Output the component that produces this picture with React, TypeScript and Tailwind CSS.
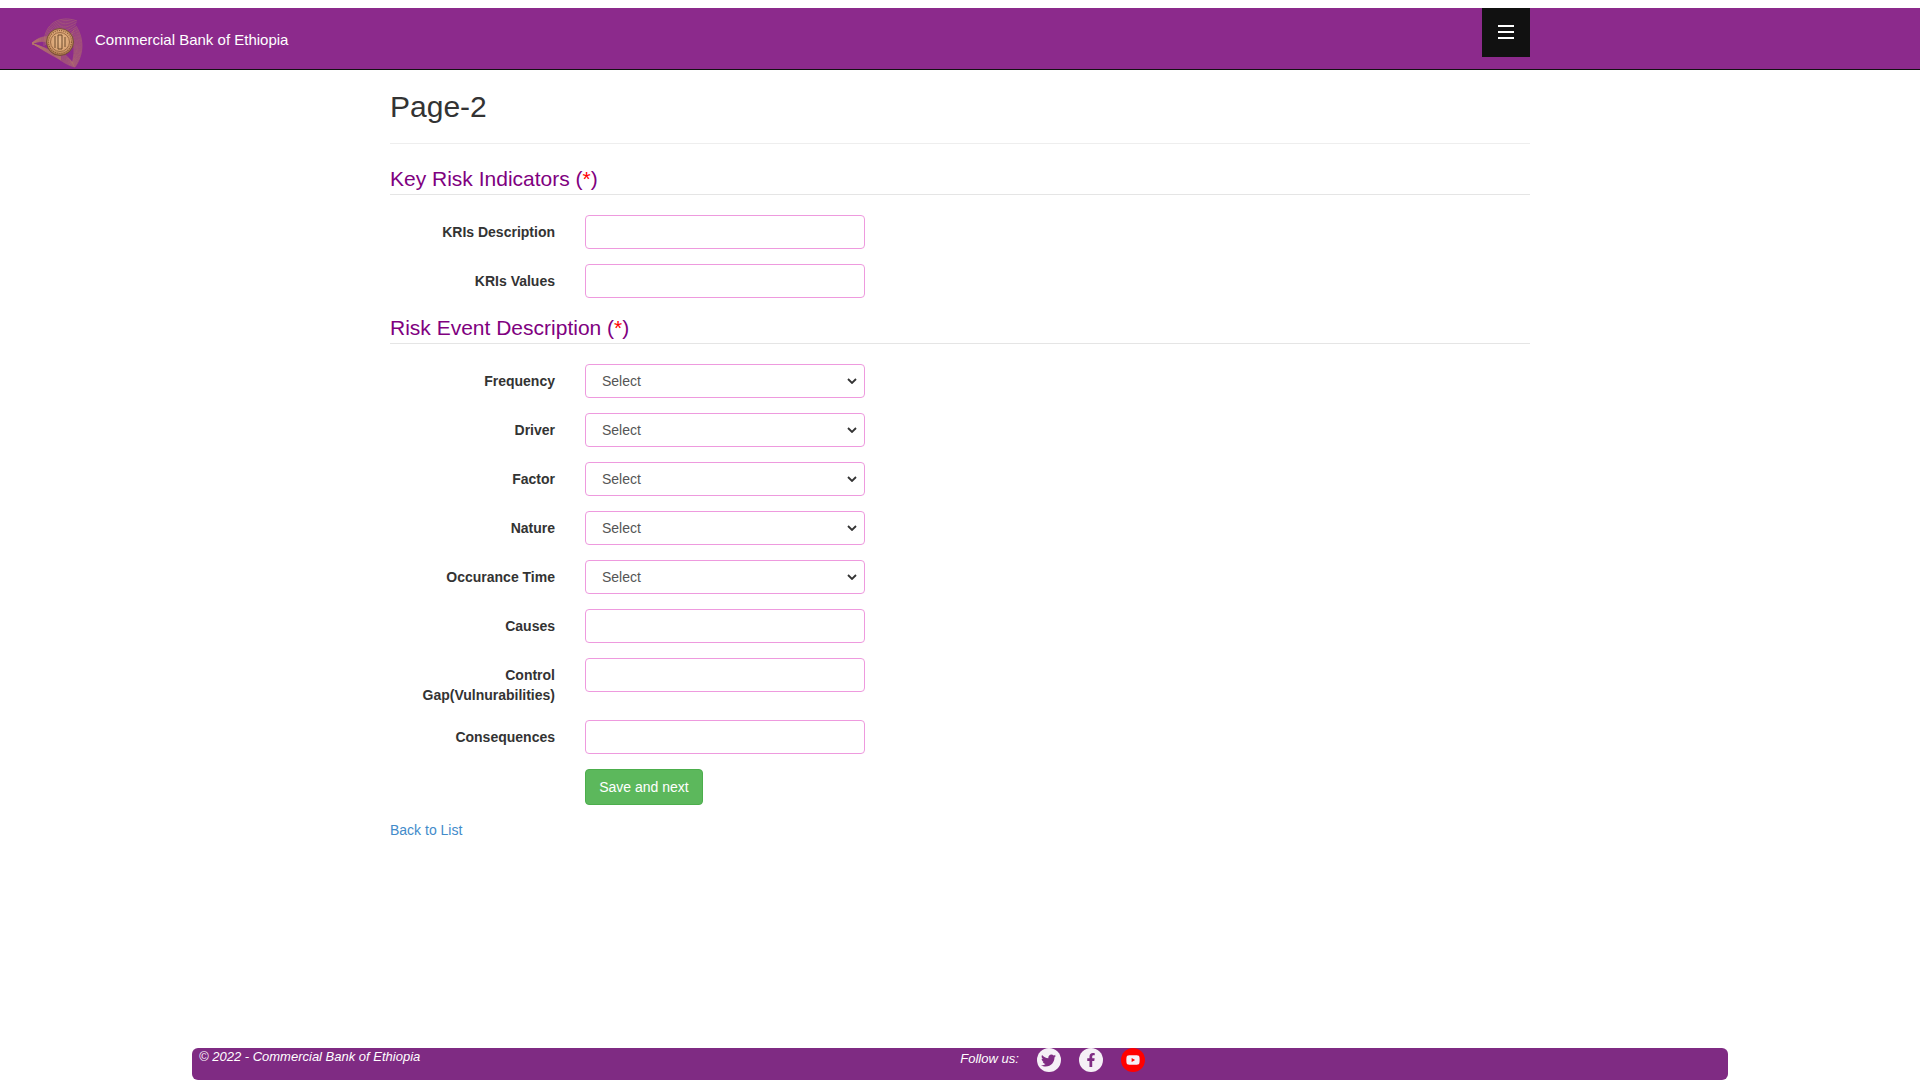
import React from "react";
import { FaTwitter, FaFacebookF, FaYoutube } from "react-icons/fa";

function Logo() {
  const rings = Array.from({ length: 10 }, (_, i) => i);
  return (
    <svg width="52" height="52" viewBox="0 0 52 52" className="shrink-0">
      <defs>
        <radialGradient id="coin" cx="50%" cy="45%" r="55%">
          <stop offset="0%" stopColor="#e8b98a" />
          <stop offset="70%" stopColor="#d8a272" />
          <stop offset="100%" stopColor="#9a6440" />
        </radialGradient>
      </defs>
      <g fill="none" stroke="#c08a60" strokeWidth="0.5" opacity="0.8">
        {rings.map((i) => (
          <path key={`a${i}`} d={`M${13 + i * 1.5} ${30 - i} C ${12 + i} ${6 + i * 1.2}, ${30 + i * 0.5} ${-1 + i * 1.5}, ${46 - i * 0.5} ${5 + i * 1.6}`} />
        ))}
        {rings.map((i) => (
          <path key={`b${i}`} d={`M${45 - i * 0.7} ${10 + i} C ${54 - i} ${24 + i * 0.5}, ${52 - i} ${40}, ${44 - i * 0.3} ${51 - i * 0.5} C ${38} ${50 - i}, ${30} ${45 - i}, ${24 + i} ${40 - i * 0.3}`} />
        ))}
        {rings.map((i) => (
          <path key={`c${i}`} d={`M1 ${27 + i * 0.1} C ${8} ${21 + i * 0.4}, ${14} ${20 + i * 0.6}, ${18} ${21 + i * 0.6}`} />
        ))}
        {rings.map((i) => (
          <path key={`d${i}`} d={`M1 ${27 + i * 0.1} C ${10} ${33 - i * 0.4}, ${20} ${39 - i * 0.5}, ${30} ${44 - i * 0.4}`} />
        ))}
      </g>
      <circle cx="29" cy="26" r="13.5" fill="url(#coin)" stroke="#6d4a2d" strokeWidth="0.8" />
      <circle cx="29" cy="26" r="9.5" fill="none" stroke="#8a5c38" strokeWidth="0.8" />
      <circle cx="29" cy="26" r="11.5" fill="none" stroke="#8a5c38" strokeWidth="1.2" strokeDasharray="1 1.2" />
      <path d="M24 20v12M27 19v14M31 19v14M34 21v10M27 19h4M27 33h4" fill="none" stroke="#6d4a2d" strokeWidth="1" />
    </svg>
  );
}

function Label({ children }: { children: React.ReactNode }) {
  return (
    <label className="w-[165px] mr-[30px] shrink-0 pt-[7px] text-right text-[14px] leading-[20px] font-bold text-[#333333]">
      {children}
    </label>
  );
}

function TextRow({ label }: { label: string }) {
  return (
    <div className="flex items-start mb-[15px]">
      <Label>{label}</Label>
      <input type="text" className="w-[280px] h-[34px] rounded-[4px] border border-[#ee9ade] bg-white px-3 text-[14px] text-[#555555]" />
    </div>
  );
}

function SelectRow({ label }: { label: string }) {
  return (
    <div className="flex items-start mb-[15px]">
      <Label>{label}</Label>
      <div className="relative w-[280px] h-[34px]">
        <select className="appearance-none block w-full h-full rounded-[4px] border border-[#ee9ade] bg-white pl-4 pr-6 text-[14px] text-[#555555]">
          <option>Select</option>
        </select>
        <svg width="10" height="6" viewBox="0 0 10 6" className="absolute right-2 top-[14px] pointer-events-none">
          <path d="M1 1l4 4 4-4" fill="none" stroke="#333333" strokeWidth="1.8" />
        </svg>
      </div>
    </div>
  );
}

function Legend({ children }: { children: string }) {
  return (
    <div className="h-[31px] mb-[20px] border-b border-[#e5e5e5] text-[21px] leading-[30px] text-[#800080]">
      {children} (<span className="text-[#ff0000]">*</span>)
    </div>
  );
}

export default function App() {
  return (
    <div className="min-h-screen flex flex-col bg-white pt-2 font-['Liberation_Sans',Arial,sans-serif] text-[14px] text-[#333333]">
      <header className="h-[62px] shrink-0 bg-[#8c2a8c] border-b border-[#111111] flex items-start">
        <div className="ml-[31px] mt-[8px]">
          <Logo />
        </div>
        <span className="ml-[12px] mt-[21px] text-[15px] leading-[22px] text-white">Commercial Bank of Ethiopia</span>
        <button className="ml-auto mr-[390px] w-[48px] h-[49px] pt-[17px] bg-[#111111] flex flex-col items-center justify-start gap-1">
          <span className="block w-4 h-0.5 bg-white" />
          <span className="block w-4 h-0.5 bg-white" />
          <span className="block w-4 h-0.5 bg-white" />
        </button>
      </header>

      <main className="w-[1140px] mx-auto">
        <h2 className="mt-5 text-[30px] leading-[33px] text-[#333333]">Page-2</h2>
        <hr className="mt-5 mb-5 border-t border-[#eeeeee]" />
        <Legend>Key Risk Indicators</Legend>
        <TextRow label="KRIs Description" />
        <TextRow label="KRIs Values" />
        <Legend>Risk Event Description</Legend>
        <SelectRow label="Frequency" />
        <SelectRow label="Driver" />
        <SelectRow label="Factor" />
        <SelectRow label="Nature" />
        <SelectRow label="Occurance Time" />
        <TextRow label="Causes" />
        <TextRow label="Control Gap(Vulnurabilities)" />
        <TextRow label="Consequences" />
        <div className="pl-[195px]">
          <button className="h-[36px] w-[118px] rounded-[4px] border border-[#4cae4c] bg-[#5cb85c] text-[14px] text-white">Save and next</button>
        </div>
        <a href="#" className="block mt-[15px] leading-[20px] text-[#428bca]">Back to List</a>
      </main>

      <footer className="mt-auto mx-auto w-[1536px] h-[32px] shrink-0 rounded-[6px] bg-[#7f2b83] text-white italic text-[13px] flex items-start">
        <span className="ml-[7px] mt-px leading-[16px]">© 2022 - Commercial Bank of Ethiopia</span>
        <span className="ml-[540px] mt-[2px] leading-[18px]">Follow us:</span>
        <div className="ml-[18px] flex gap-[18px]">
          <span className="w-6 h-6 rounded-full bg-[#f5eff6] flex items-center justify-center text-[#7f2b83]"><FaTwitter size={15} /></span>
          <span className="w-6 h-6 rounded-full bg-[#f5eff6] flex items-center justify-center text-[#7f2b83]"><FaFacebookF size={14} /></span>
          <span className="w-6 h-6 rounded-full bg-[#ff0000] flex items-center justify-center text-[#f5eff6]"><FaYoutube size={14} /></span>
        </div>
      </footer>
    </div>
  );
}
